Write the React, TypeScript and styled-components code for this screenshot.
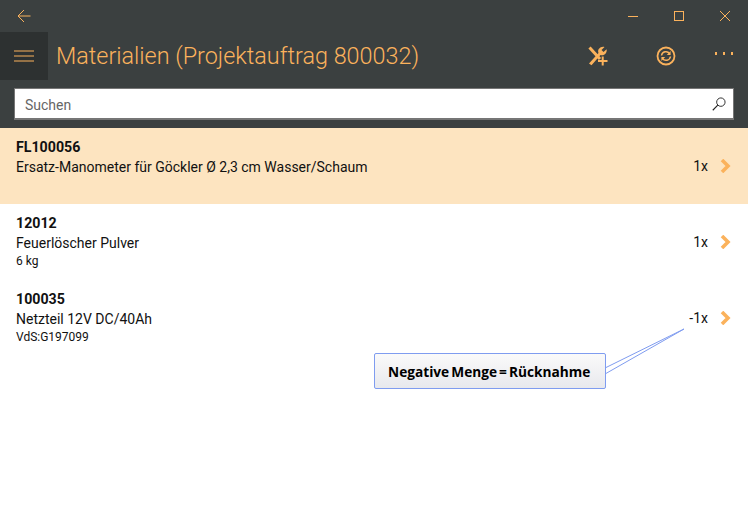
import { createGlobalStyle, styled } from "styled-components";

const GlobalStyle = createGlobalStyle`
  html, body {
    margin: 0;
    padding: 0;
    background: #ffffff;
  }
  body {
    font-family: Roboto, "Liberation Sans", sans-serif;
  }
`;

const ACCENT = "#fbb25c";

const Page = styled.div`
  position: relative;
  width: 748px;
  height: 523px;
  overflow: hidden;
  background: #ffffff;
`;

const Top = styled.div`
  background: #3b4040;
  height: 128px;
`;

const TitleBar = styled.div`
  height: 32px;
  display: flex;
  align-items: center;
  justify-content: space-between;
`;

const BackButton = styled.div`
  width: 48px;
  height: 32px;
  display: flex;
  align-items: center;
  justify-content: center;
`;

const WindowButtons = styled.div`
  display: flex;
`;

const WindowButton = styled.div`
  width: 46px;
  height: 32px;
  display: flex;
  align-items: center;
  justify-content: center;
`;

const Header = styled.div`
  height: 48px;
  display: flex;
  align-items: center;
`;

const MenuButton = styled.div`
  width: 48px;
  height: 48px;
  background: #2d3131;
  display: flex;
  align-items: center;
  justify-content: center;
`;

const Title = styled.h1`
  flex: 1;
  margin: 0 0 0 8px;
  font-size: 23.4px;
  font-weight: 300;
  color: ${ACCENT};
  white-space: nowrap;
`;

const HeaderAction = styled.div`
  width: 68px;
  height: 48px;
  display: flex;
  align-items: center;
  justify-content: center;
`;

const MoreAction = styled.div`
  width: 48px;
  height: 48px;
  display: flex;
  justify-content: center;
  gap: 5.5px;
  padding-top: 20px;
  box-sizing: border-box;
`;

const Dot = styled.span`
  width: 2.5px;
  height: 2.5px;
  background: ${ACCENT};
`;

const SearchBox = styled.div`
  margin: 8px 14px 0;
  height: 32px;
  box-sizing: border-box;
  background: #ffffff;
  border: 1px solid #767676;
  border-bottom-width: 2px;
  display: flex;
  align-items: center;
  justify-content: space-between;
  padding: 2px 7px 0 10px;
`;

const SearchHint = styled.span`
  font-size: 14px;
  color: #666666;
`;

const SearchIcon = styled.svg`
  margin-top: -2px;
`;

const Row = styled.div<{ $selected?: boolean }>`
  height: 76px;
  box-sizing: border-box;
  padding: 9px 17px 0 16px;
  display: flex;
  justify-content: space-between;
  background: ${(p) => (p.$selected ? "#fde4c0" : "#ffffff")};
  color: #111111;
`;

const RowText = styled.div`
  display: flex;
  flex-direction: column;
`;

const Code = styled.div`
  font-size: 14.2px;
  font-weight: 700;
  line-height: 20px;
`;

const Name = styled.div`
  font-size: 14px;
  line-height: 20px;
`;

const Detail = styled.div`
  font-size: 12px;
  line-height: 15px;
  margin-top: 1px;
`;

const RowEnd = styled.div`
  display: flex;
  align-items: center;
  gap: 12px;
  height: 20px;
  margin-top: 19px;
  font-size: 14px;
`;

const Callout = styled.div`
  position: absolute;
  left: 374px;
  top: 353px;
  width: 232px;
  height: 36px;
  box-sizing: border-box;
  border: 1.5px solid #7f9cf0;
  border-radius: 2px;
  background: linear-gradient(to bottom, #fafafa, #e8e9ed);
  display: flex;
  align-items: center;
  padding-left: 13px;
  font-family: "Open Sans", "Liberation Sans", sans-serif;
  font-size: 13.7px;
  font-weight: 700;
  word-spacing: -1.5px;
  color: #000000;
  white-space: nowrap;
`;

const Leader = styled.svg`
  position: absolute;
  left: 600px;
  top: 325px;
`;

const Chevron = () => (
  <svg width="11" height="14" viewBox="0 0 11 14">
    <path d="M2 1 L8 7 L2 13" fill="none" stroke={ACCENT} strokeWidth="3.6" />
  </svg>
);

const items = [
  { code: "FL100056", name: "Ersatz-Manometer für Göckler Ø 2,3 cm Wasser/Schaum", detail: "", qty: "1x", selected: true },
  { code: "12012", name: "Feuerlöscher Pulver", detail: "6 kg", qty: "1x", selected: false },
  { code: "100035", name: "Netzteil 12V DC/40Ah", detail: "VdS:G197099", qty: "-1x", selected: false },
];

function App() {
  return (
    <Page>
      <GlobalStyle />
      <Top>
        <TitleBar>
          <BackButton>
            <svg width="14" height="14" viewBox="0 0 14 14">
              <path d="M13.5 7 H1 M7 1 L1 7 L7 13" fill="none" stroke={ACCENT} strokeWidth="1" />
            </svg>
          </BackButton>
          <WindowButtons>
            <WindowButton>
              <svg width="10" height="10" viewBox="0 0 10 10">
                <path d="M0 5.5 H10" stroke={ACCENT} strokeWidth="1" />
              </svg>
            </WindowButton>
            <WindowButton>
              <svg width="10" height="10" viewBox="0 0 10 10">
                <rect x="0.5" y="0.5" width="9" height="9" fill="none" stroke={ACCENT} strokeWidth="1" />
              </svg>
            </WindowButton>
            <WindowButton>
              <svg width="10" height="10" viewBox="0 0 10 10">
                <path d="M0 0 L10 10 M10 0 L0 10" stroke={ACCENT} strokeWidth="1" />
              </svg>
            </WindowButton>
          </WindowButtons>
        </TitleBar>
        <Header>
          <MenuButton>
            <svg width="20" height="12" viewBox="0 0 20 12">
              <path d="M0 1 H20 M0 6 H20 M0 11 H20" stroke={ACCENT} strokeWidth="1" />
            </svg>
          </MenuButton>
          <Title>Materialien (Projektauftrag 800032)</Title>
          <HeaderAction>
            <svg width="20" height="20" viewBox="0 0 20 20">
              <path d="M1.5 1.5 L12 13" stroke={ACCENT} strokeWidth="3" />
              <path d="M1 17.5 L10.5 7 C9 3.5 12.5 0 16.5 1 L13.5 4 L15.5 6 L18.6 3.2 C19.4 7 16 10.2 12.5 9 L3.5 19.2 Z" fill={ACCENT} />
              <path d="M10 15 H19.5 M14.7 10.5 V19.5" stroke={ACCENT} strokeWidth="2" />
            </svg>
          </HeaderAction>
          <HeaderAction>
            <svg width="20" height="20" viewBox="0 0 20 20">
              <circle cx="10" cy="10" r="8.5" fill="none" stroke={ACCENT} strokeWidth="1.8" />
              <path d="M5.5 9.5 A4.5 4.5 0 0 1 13.6 7.6 M14.5 10.5 A4.5 4.5 0 0 1 6.4 12.4" fill="none" stroke={ACCENT} strokeWidth="1.5" />
              <path d="M14.6 5 V9 H10.8 Z M5.4 15 V11 H9.2 Z" fill={ACCENT} />
            </svg>
          </HeaderAction>
          <MoreAction>
            <Dot />
            <Dot />
            <Dot />
          </MoreAction>
        </Header>
        <SearchBox>
          <SearchHint>Suchen</SearchHint>
          <SearchIcon width="14" height="14" viewBox="0 0 15 15">
            <circle cx="9.5" cy="5.5" r="4.5" fill="none" stroke="#222222" strokeWidth="1" />
            <path d="M6.2 8.8 L0.8 14.2" stroke="#222222" strokeWidth="1.2" />
          </SearchIcon>
        </SearchBox>
      </Top>
      {items.map((item) => (
        <Row key={item.code} $selected={item.selected}>
          <RowText>
            <Code>{item.code}</Code>
            <Name>{item.name}</Name>
            {item.detail && <Detail>{item.detail}</Detail>}
          </RowText>
          <RowEnd>
            {item.qty}
            <Chevron />
          </RowEnd>
        </Row>
      ))}
      <Leader width="90" height="50" viewBox="0 0 90 50">
        <path d="M5 43 L84 4 L5 49" fill="none" stroke="#7f9cf0" strokeWidth="1" />
      </Leader>
      <Callout>Negative Menge = Rücknahme</Callout>
    </Page>
  );
}

export default App;
